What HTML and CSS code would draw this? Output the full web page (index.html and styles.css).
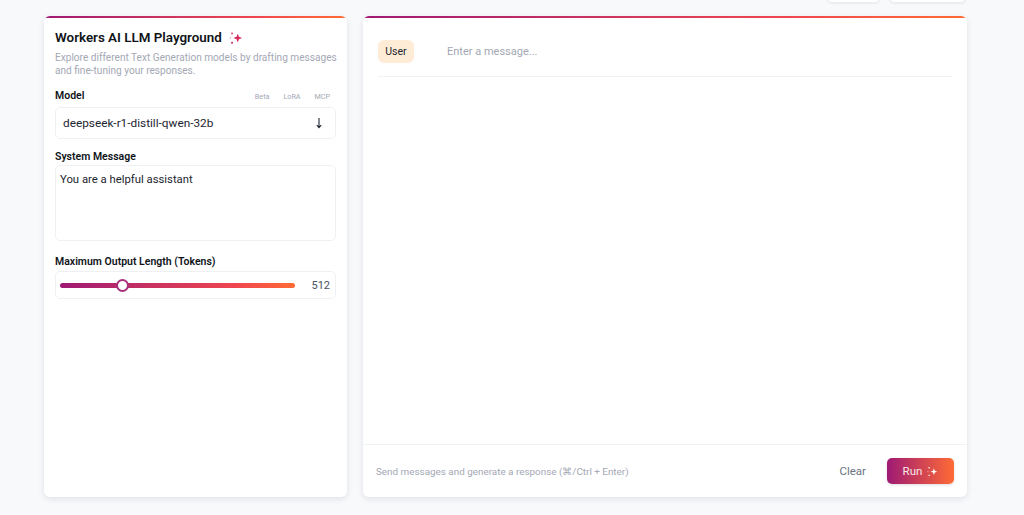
FILE: index.html
```html
<!DOCTYPE html>
<html lang="en">
<head>
    <title>Workers AI LLM Playground</title>
    <link rel="stylesheet" href="styles.css">
</head>
<body>
    <header class="topbar">
        <div class="top-button top-button-small"></div>
        <div class="top-button top-button-large"></div>
    </header>

    <main class="layout">
        <section class="panel sidebar">
            <div class="title-row">
                <h1>Workers AI LLM Playground</h1>
                <svg class="sparkle" viewBox="0 0 16 16" width="14" height="14">
                    <path fill="url(#sparkleTitle)" d="M10 3 L11.4 6.6 L15 8 L11.4 9.4 L10 13 L8.6 9.4 L5 8 L8.6 6.6 Z"/>
                    <rect x="2.4" y="1.6" width="2.2" height="2.2" rx="0.7" fill="#e0527a"/>
                    <rect x="1" y="7" width="1.4" height="1.6" rx="0.5" fill="#e68aa6"/>
                    <rect x="2.4" y="12.4" width="2.2" height="2.2" rx="0.7" fill="#c8407a"/>
                    <defs>
                        <linearGradient id="sparkleTitle" x1="0" y1="0" x2="1" y2="1">
                            <stop offset="0" stop-color="#c0246e"/>
                            <stop offset="1" stop-color="#f0394f"/>
                        </linearGradient>
                    </defs>
                </svg>
            </div>
            <p class="intro">Explore different Text Generation models by drafting messages and fine-tuning your responses.</p>

            <div class="label-row">
                <label class="field-label">Model</label>
                <div class="tags">
                    <span>Beta</span>
                    <span>LoRA</span>
                    <span>MCP</span>
                </div>
            </div>
            <div class="field model-select">
                <span>deepseek-r1-distill-qwen-32b</span>
                <svg viewBox="0 0 10 14" width="10" height="14">
                    <path d="M5 2 V11.5 M2.8 9.2 L5 11.7 L7.2 9.2" fill="none" stroke="#1c2530" stroke-width="1.1"/>
                </svg>
            </div>

            <label class="field-label system-label">System Message</label>
            <div class="field system-message">You are a helpful assistant</div>

            <label class="field-label tokens-label">Maximum Output Length (Tokens)</label>
            <div class="field tokens">
                <div class="track">
                    <div class="thumb"></div>
                </div>
                <span class="tokens-value">512</span>
            </div>
        </section>

        <section class="panel chat">
            <div class="messages">
                <div class="message-row">
                    <span class="role">User</span>
                    <span class="placeholder">Enter a message...</span>
                </div>
            </div>
            <footer class="chat-footer">
                <span class="hint">Send messages and generate a response (⌘/Ctrl + Enter)</span>
                <div class="actions">
                    <button class="clear-button">Clear</button>
                    <button class="run-button">
                        Run
                        <svg viewBox="0 0 14 14" width="11" height="11">
                            <path fill="#ffffff" d="M8.8 3 L9.9 6.1 L13 7.2 L9.9 8.3 L8.8 11.4 L7.7 8.3 L4.6 7.2 L7.7 6.1 Z"/>
                            <rect x="1.8" y="1.4" width="1.8" height="1.8" rx="0.6" fill="#ffffff"/>
                            <rect x="0.6" y="6.6" width="1.2" height="1.2" rx="0.4" fill="#fbd5d5"/>
                            <rect x="1.8" y="11" width="1.8" height="1.8" rx="0.6" fill="#ffffff"/>
                        </svg>
                    </button>
                </div>
            </footer>
        </section>
    </main>
</body>
</html>
```

FILE: styles.css
```css
* {
    box-sizing: border-box;
}

html, body {
    height: 100%;
}

body {
    margin: 0;
    overflow: hidden;
    background: #f8f9fb;
    font-family: Roboto, "Noto Sans", sans-serif;
    color: #0f1419;
}

.topbar {
    height: 3px;
    margin-bottom: 13px;
    padding-right: 58px;
    display: flex;
    justify-content: flex-end;
    align-items: flex-end;
    gap: 9px;
}

.top-button {
    flex: none;
    height: 30px;
    background: #ffffff;
    border: 1px solid #eceef1;
    border-radius: 5px;
    box-shadow: 0 1px 2px rgba(15, 23, 42, 0.06);
}

.top-button-small {
    width: 53px;
}

.top-button-large {
    width: 77px;
}

.layout {
    display: flex;
    gap: 16px;
    height: 481px;
    padding: 0 57px 0 44px;
}

.panel {
    position: relative;
    display: flex;
    flex-direction: column;
    background: #ffffff;
    border-radius: 6px;
    box-shadow: 0 2px 6px rgba(15, 23, 42, 0.1);
    overflow: hidden;
}

.panel::before {
    content: "";
    position: absolute;
    top: 0;
    left: 0;
    right: 0;
    height: 2px;
    background: linear-gradient(90deg, #9e1a74, #f0474f 70%, #ff6b35);
}

.sidebar {
    width: 303px;
    flex: none;
    padding: 12px 11px 0;
}

.chat {
    flex: 1;
}

.title-row {
    display: flex;
    align-items: center;
    gap: 7px;
    height: 20px;
}

h1 {
    margin: 0;
    font-size: 13.4px;
    font-weight: 600;
    line-height: 20px;
}

.sparkle {
    flex: none;
}

.intro {
    margin: 3px -5px 0 0;
    font-size: 10.1px;
    line-height: 13px;
    color: #a3a8b4;
}

.label-row {
    display: flex;
    justify-content: space-between;
    align-items: center;
    margin-top: 12px;
    height: 14px;
}

.field-label {
    display: block;
    font-size: 10.5px;
    font-weight: 600;
    line-height: 14px;
}

.tags {
    display: flex;
    gap: 14px;
    padding-right: 6px;
    font-size: 7.2px;
    color: #a3a8b4;
}

.field {
    border: 1px solid #eef0f3;
    border-radius: 5px;
    background: #ffffff;
}

.model-select {
    display: flex;
    justify-content: space-between;
    align-items: center;
    height: 32px;
    margin-top: 4px;
    padding: 0 11px 0 7px;
    font-size: 11.8px;
    color: #1c2530;
}

.system-label {
    margin-top: 11px;
}

.system-message {
    height: 76px;
    margin-top: 1px;
    padding: 5px 4px;
    font-size: 11.3px;
    line-height: 17px;
    color: #1c2530;
}

.tokens-label {
    margin-top: 14px;
}

.tokens {
    display: flex;
    align-items: center;
    justify-content: space-between;
    height: 28px;
    margin-top: 2px;
    padding: 0 5px 0 4px;
}

.track {
    position: relative;
    width: 235px;
    height: 5px;
    border-radius: 3px;
    background: linear-gradient(90deg, #9e1a74, #f0474f 75%, #ff6b35);
}

.thumb {
    position: absolute;
    left: 55.5px;
    top: -4px;
    width: 13px;
    height: 13px;
    background: #ffffff;
    border: 2px solid #a8307c;
    border-radius: 50%;
}

.tokens-value {
    font-size: 11px;
    color: #4b5262;
}

.messages {
    flex: 1;
    padding: 24px 15px 0;
}

.message-row {
    display: flex;
    align-items: center;
    gap: 33px;
    border-bottom: 1px solid #f1f2f4;
    padding-bottom: 13px;
}

.role {
    width: 36px;
    height: 23px;
    background: #feecd6;
    border-radius: 6px;
    font-size: 10.5px;
    line-height: 23px;
    text-align: center;
    color: #1c2530;
}

.placeholder {
    font-size: 11px;
    color: #a3a8b4;
}

.chat-footer {
    display: flex;
    justify-content: space-between;
    align-items: center;
    height: 53px;
    padding: 0 13px;
    border-top: 1px solid #f1f2f4;
}

.hint {
    font-size: 9.9px;
    color: #a3a8b4;
}

.actions {
    display: flex;
    align-items: center;
    gap: 21px;
}

.actions button {
    border: none;
    font-family: inherit;
    font-size: 11.5px;
    cursor: pointer;
}

.clear-button {
    padding: 0;
    background: none;
    color: #6b7280;
}

.run-button {
    display: flex;
    justify-content: center;
    align-items: center;
    gap: 5px;
    width: 67px;
    height: 26px;
    background: linear-gradient(90deg, #9e1a74, #ff6b35);
    border-radius: 5px;
    color: #fbe6ea;
    box-shadow: 0 1px 3px rgba(15, 23, 42, 0.15);
}
```
